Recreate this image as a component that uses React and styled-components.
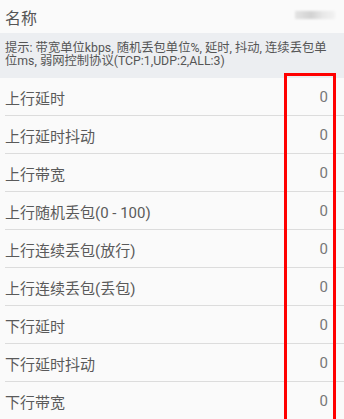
import React from "react";
import styled, { createGlobalStyle } from "styled-components";

const Global = createGlobalStyle`
  html, body {
    margin: 0;
    padding: 0;
    background: #fafafa;
    font-family: Roboto, "Noto Sans CJK SC", sans-serif;
    overflow: hidden;
  }
`;

const Page = styled.div`
  position: relative;
  width: 344px;
  height: 419px;
  overflow: hidden;
  background: #fafafa;
`;

const Header = styled.div`
  height: 33px;
  display: flex;
  align-items: center;
  justify-content: space-between;
  padding: 0 9px 0 5px;
  box-sizing: border-box;
  font-size: 16px;
  color: #555;
`;

const Blurred = styled.div`
  width: 40px;
  height: 8px;
  background: linear-gradient(90deg, #e4e4e4 0%, #d2d2d2 40%, #e8e8e8 70%, #f2f2f2 100%);
  filter: blur(1px);
  margin-top: -4px;
`;

const Hint = styled.div`
  height: 45px;
  box-sizing: border-box;
  background: #eceef1;
  padding: 9px 10px 0 5px;
  font-size: 12.3px;
  line-height: 13px;
  color: #555;
`;

const HintLine = styled.div`
  white-space: nowrap;
`;

const List = styled.div`
  display: flex;
  flex-direction: column;
`;

const Row = styled.div`
  height: 38px;
  display: flex;
  align-items: center;
  justify-content: space-between;
  padding: 0 16px 0 5px;
  box-sizing: border-box;
  position: relative;
  font-size: 15px;
  color: #5a5a5a;
  &::after {
    content: "";
    position: absolute;
    left: 5px;
    right: 0;
    bottom: 0;
    height: 1px;
    background: #dcdcdc;
  }
`;

const Value = styled.span`
  color: #777;
  font-size: 15px;
`;

const Highlight = styled.div`
  position: absolute;
  left: 284px;
  top: 73px;
  width: 52px;
  height: 360px;
  box-sizing: border-box;
  border: 3px solid #f00;
  pointer-events: none;
`;

const rows = [
  "上行延时",
  "上行延时抖动",
  "上行带宽",
  "上行随机丢包(0 - 100)",
  "上行连续丢包(放行)",
  "上行连续丢包(丢包)",
  "下行延时",
  "下行延时抖动",
  "下行带宽",
];

export default function App() {
  return (
    <>
      <Global />
      <Page>
        <Header>
          <span>名称</span>
          <Blurred />
        </Header>
        <Hint>
          <HintLine>提示: 带宽单位kbps, 随机丢包单位%, 延时, 抖动, 连续丢包单</HintLine>
          <HintLine>位ms, 弱网控制协议(TCP:1,UDP:2,ALL:3)</HintLine>
        </Hint>
        <List>
          {rows.map((label) => (
            <Row key={label}>
              <span>{label}</span>
              <Value>0</Value>
            </Row>
          ))}
        </List>
        <Highlight />
      </Page>
    </>
  );
}
